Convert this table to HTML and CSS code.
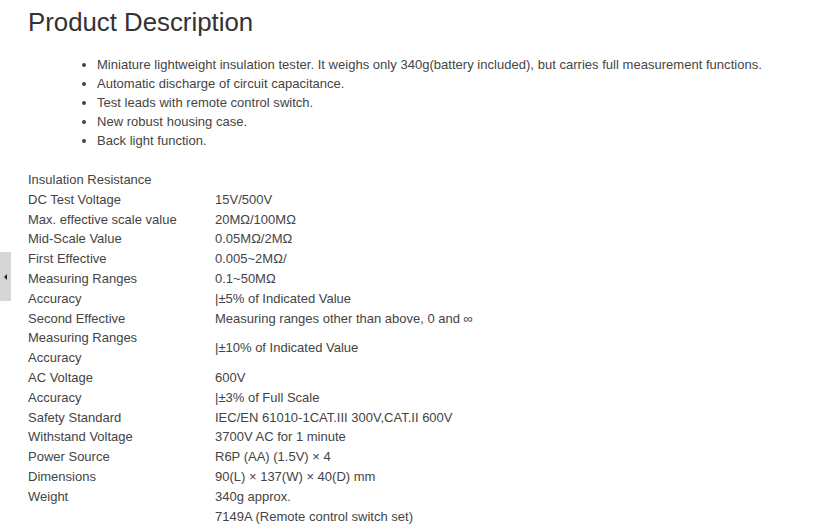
FILE: index.html
```html
<!DOCTYPE html>
<html>
<head>
<meta charset="utf-8">
<link rel="stylesheet" href="styles.css">
</head>
<body>
<div class="side-tab"><span class="tri"></span></div>
<main class="page">
  <h1 class="title">Product Description</h1>
  <ul class="features">
    <li>Miniature lightweight insulation tester. It weighs only 340g(battery included), but carries full measurement functions.</li>
    <li>Automatic discharge of circuit capacitance.</li>
    <li>Test leads with remote control switch.</li>
    <li>New robust housing case.</li>
    <li>Back light function.</li>
  </ul>
  <table class="specs">
    <tr><td class="k">Insulation Resistance</td><td></td></tr>
    <tr><td class="k">DC Test Voltage</td><td>15V/500V</td></tr>
    <tr><td class="k">Max. effective scale value</td><td>20MΩ/100MΩ</td></tr>
    <tr><td class="k">Mid-Scale Value</td><td>0.05MΩ/2MΩ</td></tr>
    <tr><td class="k">First Effective</td><td>0.005~2MΩ/</td></tr>
    <tr><td class="k">Measuring Ranges</td><td>0.1~50MΩ</td></tr>
    <tr><td class="k">Accuracy</td><td>|±5% of Indicated Value</td></tr>
    <tr><td class="k">Second Effective</td><td>Measuring ranges other than above, 0 and ∞</td></tr>
    <tr><td class="k">Measuring Ranges<br>Accuracy</td><td>|±10% of Indicated Value</td></tr>
    <tr><td class="k">AC Voltage</td><td>600V</td></tr>
    <tr><td class="k">Accuracy</td><td>|±3% of Full Scale</td></tr>
    <tr><td class="k">Safety Standard</td><td>IEC/EN 61010-1CAT.III 300V,CAT.II 600V</td></tr>
    <tr><td class="k">Withstand Voltage</td><td>3700V AC for 1 minute</td></tr>
    <tr><td class="k">Power Source</td><td>R6P (AA) (1.5V) × 4</td></tr>
    <tr><td class="k">Dimensions</td><td>90(L) × 137(W) × 40(D) mm</td></tr>
    <tr><td class="k">Weight</td><td>340g approx.</td></tr>
    <tr><td class="k"></td><td>7149A (Remote control switch set)</td></tr>
  </table>
</main>
</body>
</html>
```
FILE: styles.css
```css
html, body {
  margin: 0;
  padding: 0;
  background: #ffffff;
}
body {
  font-family: "Liberation Sans", Arial, sans-serif;
  color: #3a3a3a;
  overflow: hidden;
}
.page {
  padding-left: 28px;
  padding-top: 7px;
}
.title {
  margin: 0;
  font-size: 25.8px;
  line-height: 30px;
  font-weight: normal;
  color: #333333;
}
.features {
  margin: 18px 0 0 0;
  padding-left: 69px;
  font-size: 13px;
  line-height: 19px;
  letter-spacing: 0.025px;
  color: #444444;
}
.features li {
  margin: 0;
}
.specs {
  margin-top: 20px;
  border-collapse: collapse;
  font-size: 13px;
  line-height: 19.8px;
  color: #444444;
}
.specs td {
  padding: 0;
  vertical-align: middle;
  white-space: nowrap;
}
.specs td.k {
  width: 187px;
}
.side-tab {
  position: absolute;
  left: 0;
  top: 252px;
  width: 11px;
  height: 49px;
  background: #d6d6d6;
  display: flex;
  align-items: center;
  justify-content: center;
}
.tri {
  width: 0;
  height: 0;
  border-top: 3px solid transparent;
  border-bottom: 3px solid transparent;
  border-right: 3px solid #222;
}
```
